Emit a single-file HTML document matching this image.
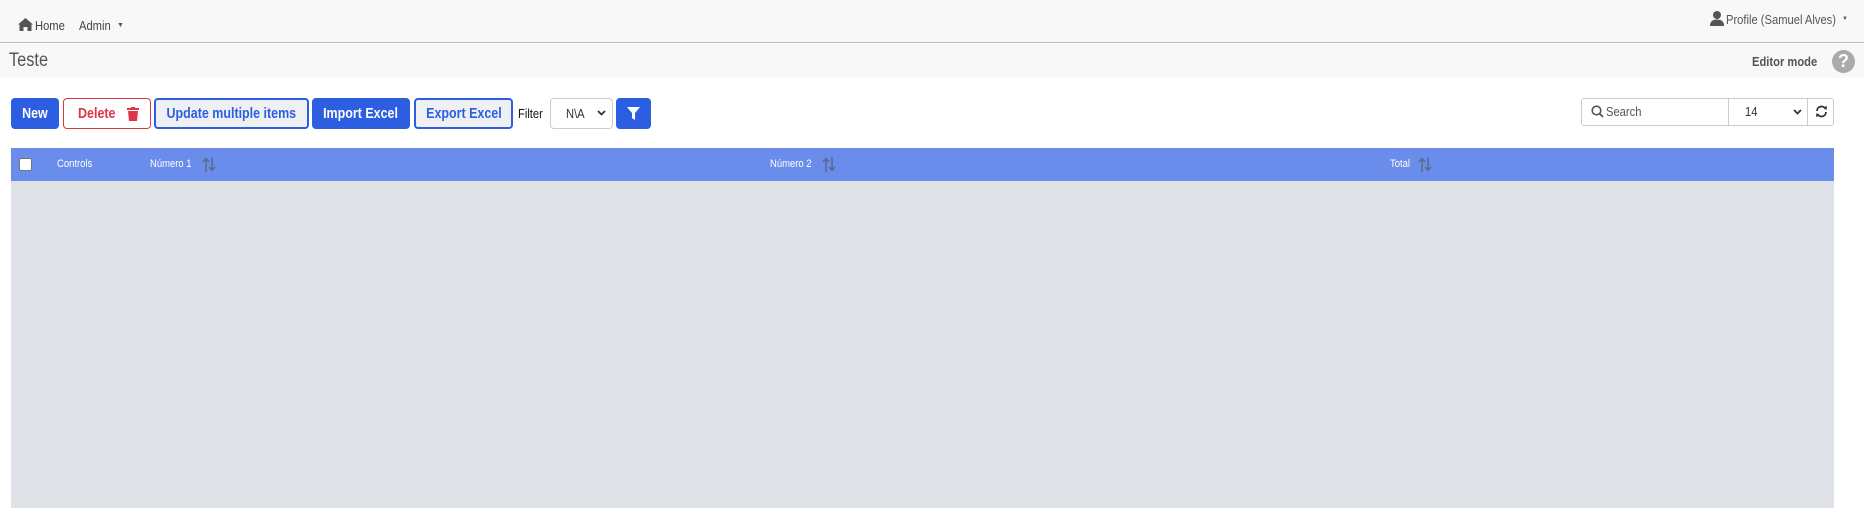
<!DOCTYPE html>
<html><head><meta charset="utf-8"><style>
*{box-sizing:border-box;margin:0;padding:0}
body{width:1864px;height:508px;overflow:hidden;background:#fff;font-family:"Liberation Sans",Arial,sans-serif;position:relative;color:#333}
.abs{position:absolute;white-space:nowrap}
.sx{display:inline-block;transform:scaleX(.86);transform-origin:left center;white-space:nowrap}
.nav{left:0;top:0;width:1864px;height:43px;background:#f8f8f8;border-bottom:1px solid #b8b8b8}
.ph{left:0;top:44px;width:1864px;height:34px;background:#f8f8f8}
.btn{position:absolute;top:98px;height:31px;border-radius:4px;font-size:14.5px;font-weight:bold;display:flex;align-items:center;justify-content:center;white-space:nowrap}
.btn .c{display:inline-block;transform:scaleX(.86);transform-origin:center}
.blue{background:#2b5ee0;color:#fff}
.out{background:#eef0f4;border:2px solid #2b5ee0;color:#2b5ee0}
.th{position:absolute;top:158px;font-size:11px;color:#fff}
</style></head><body>
<div class="abs nav"></div>
<svg class="abs" style="left:18px;top:18px" width="15" height="13" viewBox="0 0 15 13"><path d="M7.5 0 L15 6.5 L13.5 6.5 L13.5 13 L9.5 13 L9.5 9 L5.5 9 L5.5 13 L1.5 13 L1.5 6.5 L0 6.5 Z" fill="#555"/></svg>
<div class="abs" style="left:35px;top:18px;font-size:13px;color:#444"><span class="sx">Home</span></div>
<div class="abs" style="left:79px;top:18px;font-size:13px;color:#444"><span class="sx">Admin</span></div>
<div class="abs" style="left:117px;top:22px;font-size:7px;color:#555">▼</div>
<svg class="abs" style="left:1710px;top:11px" width="14" height="15" viewBox="0 0 14 15"><circle cx="7" cy="4" r="4" fill="#555"/><path d="M0 15 Q0 8.5 7 8.5 Q14 8.5 14 15Z" fill="#555"/></svg>
<div class="abs" style="left:1726px;top:12px;font-size:13px;color:#555"><span class="sx">Profile (Samuel Alves)</span></div>
<div class="abs" style="left:1842px;top:16px;font-size:6px;color:#555">▼</div>
<div class="abs ph"></div>
<div class="abs" style="left:9px;top:50px;font-size:19px;color:#555"><span class="sx">Teste</span></div>
<div class="abs" style="left:1752px;top:54px;font-size:13px;font-weight:bold;color:#555"><span class="sx">Editor mode</span></div>
<div class="abs" style="left:1832px;top:50px;width:23px;height:23px;border-radius:50%;background:#aaa;color:#fff;font-weight:bold;font-size:18px;text-align:center;line-height:23px">?</div>

<div class="btn blue" style="left:11px;width:48px"><span class="c">New</span></div>
<div class="btn" style="left:63px;width:88px;border:1px solid #dc3545;color:#dc3545;background:#fff"><span class="c">Delete</span>&nbsp;&nbsp;<svg width="12" height="14" viewBox="0 0 12 14"><rect x="0" y="1" width="12" height="2" fill="#dc3545"/><rect x="4" y="0" width="4" height="2" fill="#dc3545"/><path d="M1 4 H11 L10 14 H2Z" fill="#dc3545"/></svg></div>
<div class="btn out" style="left:154px;width:155px"><span class="c">Update multiple items</span></div>
<div class="btn blue" style="left:312px;width:98px"><span class="c">Import Excel</span></div>
<div class="btn out" style="left:414px;width:99px"><span class="c">Export Excel</span></div>
<div class="abs" style="left:518px;top:106px;font-size:13px;color:#111"><span class="sx">Filter</span></div>
<div class="abs" style="left:550px;top:98px;width:63px;height:31px;border:1px solid #ccc;border-radius:4px;background:#fff"></div>
<div class="abs" style="left:566px;top:106px;font-size:13px;color:#333"><span class="sx">N\A</span></div>
<svg class="abs" style="left:597px;top:110px" width="9" height="6" viewBox="0 0 9 6"><path d="M1 1 L4.5 4.5 L8 1" fill="none" stroke="#333" stroke-width="1.8"/></svg>
<div class="btn blue" style="left:616px;width:35px"><svg width="13" height="13" viewBox="0 0 13 13"><path d="M0 0 H13 L8 6 V13 L5 11 V6Z" fill="#fff"/></svg></div>

<div class="abs" style="left:1581px;top:98px;width:253px;height:28px;border:1px solid #ccc;border-radius:3px;background:#fff"></div>
<div class="abs" style="left:1728px;top:98px;width:1px;height:28px;background:#ccc"></div>
<div class="abs" style="left:1807px;top:98px;width:1px;height:28px;background:#ccc"></div>
<svg class="abs" style="left:1591px;top:105px" width="13" height="13" viewBox="0 0 13 13"><circle cx="5.5" cy="5.5" r="4.3" fill="none" stroke="#555" stroke-width="1.6"/><path d="M8.5 8.5 L12 12" stroke="#555" stroke-width="1.8"/></svg>
<div class="abs" style="left:1606px;top:104px;font-size:13px;color:#555"><span class="sx">Search</span></div>
<div class="abs" style="left:1745px;top:104px;font-size:13px;color:#333"><span class="sx">14</span></div>
<svg class="abs" style="left:1793px;top:109px" width="9" height="6" viewBox="0 0 9 6"><path d="M1 1 L4.5 4.5 L8 1" fill="none" stroke="#333" stroke-width="1.8"/></svg>
<svg class="abs" style="left:1815px;top:105px" width="13" height="13" viewBox="0 0 13 13"><path d="M2 6 A4.5 4.5 0 0 1 10.5 4" fill="none" stroke="#333" stroke-width="1.8"/><path d="M8 2.5 L11.5 5 L12 1Z" fill="#333"/><path d="M11 7 A4.5 4.5 0 0 1 2.5 9" fill="none" stroke="#333" stroke-width="1.8"/><path d="M5 10.5 L1.5 8 L1 12Z" fill="#333"/></svg>

<div class="abs" style="left:11px;top:148px;width:1823px;height:33px;background:#6a8deb"></div>
<div class="abs" style="left:11px;top:181px;width:1823px;height:327px;background:#dee1e6"></div>
<div class="abs" style="left:19px;top:158px;width:13px;height:13px;background:#fff;border:1px solid #777;border-radius:2px"></div>
<div class="th" style="left:57px"><span class="sx">Controls</span></div>
<div class="th" style="left:150px"><span class="sx">Número 1</span></div>
<div class="th" style="left:770px"><span class="sx">Número 2</span></div>
<div class="th" style="left:1390px"><span class="sx">Total</span></div>
<svg class="abs" style="left:202px;top:157px" width="14" height="15" viewBox="0 0 14 15"><path d="M4 15 V2 M1 5 L4 1.5 L7 5 M10 0 V13 M7 10 L10 13.5 L13 10" fill="none" stroke="#5a6a8a" stroke-width="1.5"/></svg>
<svg class="abs" style="left:822px;top:157px" width="14" height="15" viewBox="0 0 14 15"><path d="M4 15 V2 M1 5 L4 1.5 L7 5 M10 0 V13 M7 10 L10 13.5 L13 10" fill="none" stroke="#5a6a8a" stroke-width="1.5"/></svg>
<svg class="abs" style="left:1418px;top:157px" width="14" height="15" viewBox="0 0 14 15"><path d="M4 15 V2 M1 5 L4 1.5 L7 5 M10 0 V13 M7 10 L10 13.5 L13 10" fill="none" stroke="#5a6a8a" stroke-width="1.5"/></svg>
</body></html>
